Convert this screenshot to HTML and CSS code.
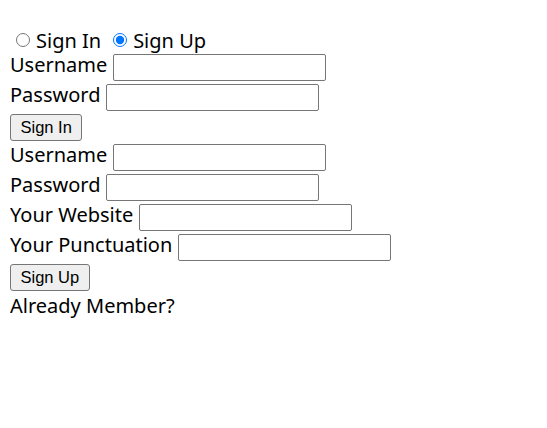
FILE: index.html
```html
<!DOCTYPE html>
<html>
<head>
<meta charset="utf-8">
<link rel="stylesheet" href="styles.css">
</head>
<body>
<form class="auth">
  <div class="row choice">
    <label class="opt"><input type="radio" name="mode" class="radio"><span>Sign In</span></label>
    <label class="opt"><input type="radio" name="mode" class="radio" checked><span>Sign Up</span></label>
  </div>
  <div class="row"><span class="lbl">Username</span><input type="text" class="field"></div>
  <div class="row"><span class="lbl">Password</span><input type="password" class="field"></div>
  <div class="row"><button type="button" class="btn">Sign In</button></div>
  <div class="row"><span class="lbl">Username</span><input type="text" class="field"></div>
  <div class="row"><span class="lbl">Password</span><input type="password" class="field"></div>
  <div class="row"><span class="lbl">Your Website</span><input type="text" class="field"></div>
  <div class="row"><span class="lbl">Your Punctuation</span><input type="text" class="field"></div>
  <div class="row"><button type="button" class="btn">Sign Up</button></div>
  <div class="row text">Already Member?</div>
</form>
</body>
</html>
```
FILE: styles.css
```css
html, body {
  background: #ffffff;
}
body {
  margin: 10px;
  font-family: "Noto Sans", "Open Sans", sans-serif;
  font-size: 20px;
  color: #000000;
}
.auth {
  display: flex;
  flex-direction: column;
  padding-top: 10px;
}
.row {
  display: flex;
  align-items: center;
  gap: 6px;
  height: 30px;
}
.choice {
  gap: 6px;
  height: 24px;
  padding-top: 8px;
}
.opt {
  display: flex;
  align-items: center;
}
.radio {
  width: 14px;
  height: 14px;
  margin: 0 6px 0 6px;
  accent-color: #0075ff;
}
.lbl {
  margin-bottom: 5px;
}
.field {
  box-sizing: border-box;
  width: 213px;
  height: 27px;
  margin: 0;
  border: 1px solid #767676;
  border-radius: 2px;
  background: #ffffff;
}
.btn {
  box-sizing: border-box;
  height: 27px;
  margin: 0;
  padding: 0 9.5px;
  font-family: "Liberation Sans", Arial, sans-serif;
  font-size: 16.5px;
  color: #000000;
  background: #efefef;
  border: 1px solid #767676;
  border-radius: 3px;
}
.text {
  height: 26px;
  align-items: flex-start;
}
```
